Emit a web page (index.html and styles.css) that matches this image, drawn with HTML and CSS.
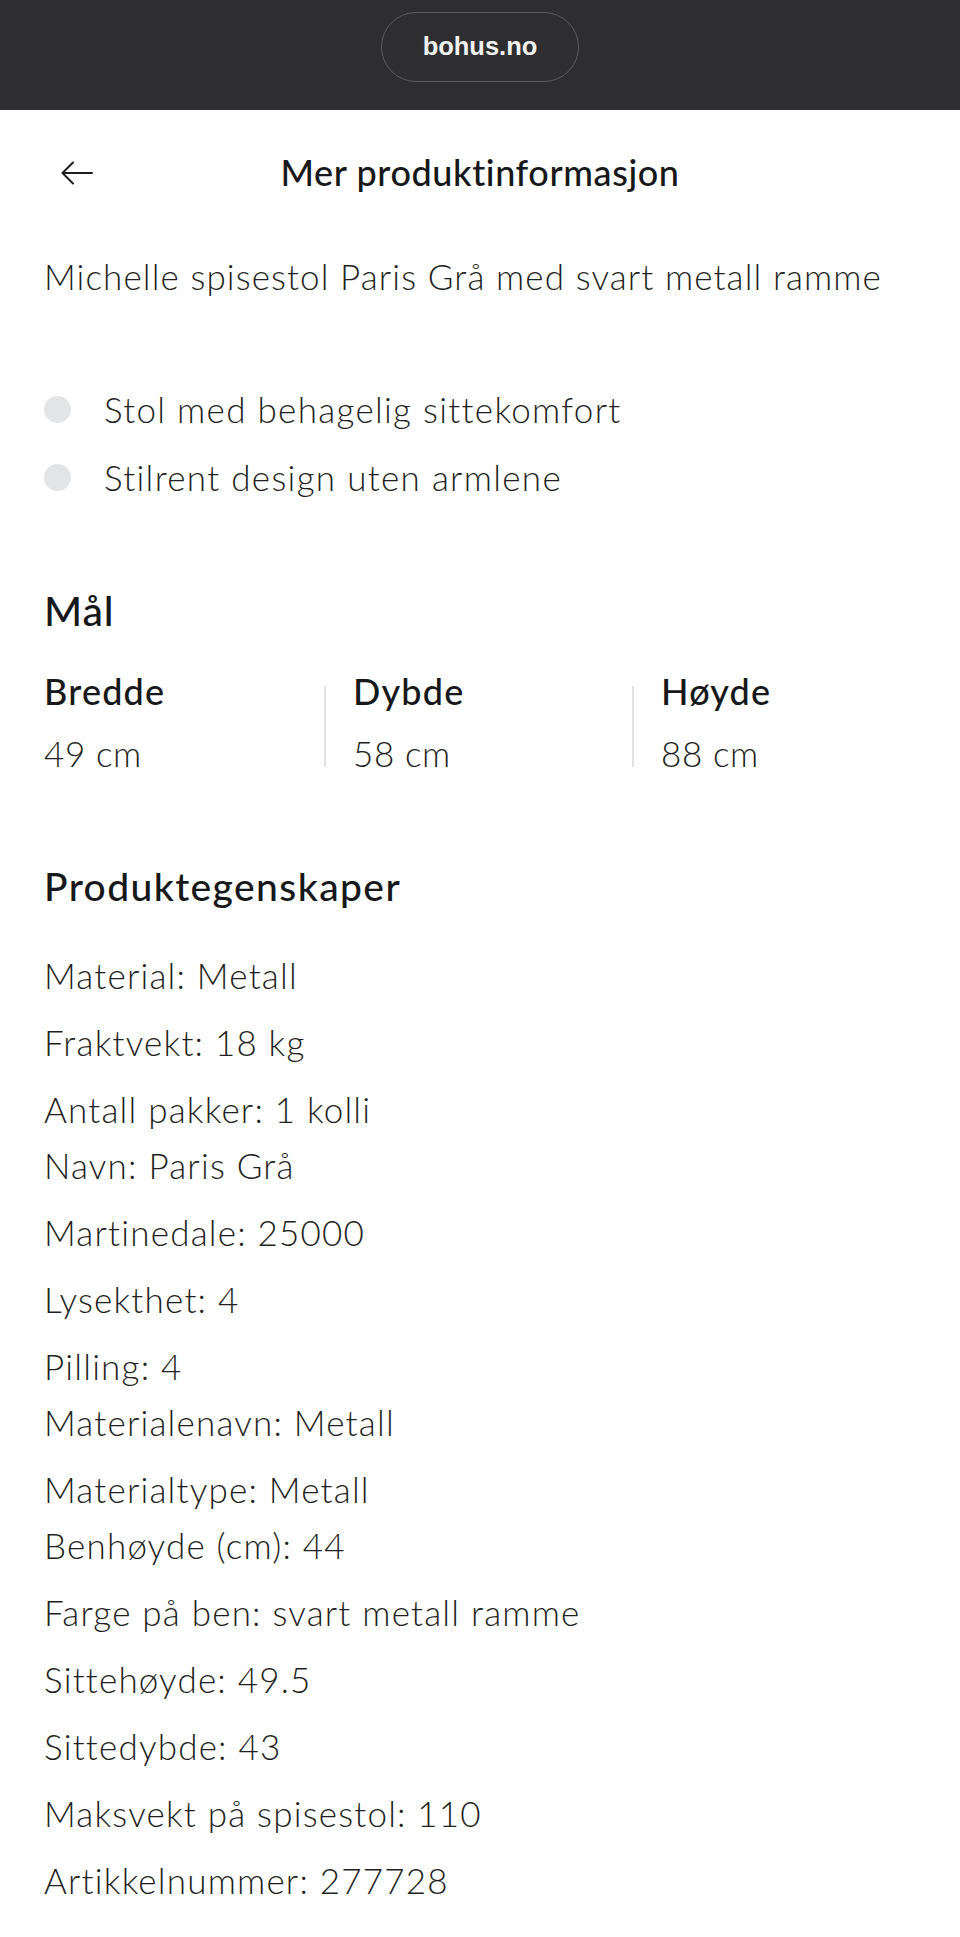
FILE: index.html
```html
<!DOCTYPE html>
<html lang="no">
<head>
<meta charset="utf-8">
<title>Mer produktinformasjon</title>
<link rel="stylesheet" href="styles.css">
</head>
<body>
<header class="browser-bar">
  <div class="url-pill">bohus.no</div>
</header>
<main class="sheet">
  <div class="sheet-head">
    <button class="back" aria-label="Tilbake">
      <svg width="32" height="24" viewBox="0 0 32 24" fill="none" stroke="#1d1d1f" stroke-width="2" stroke-linecap="round" stroke-linejoin="round"><path d="M31 12H1.5M12 1.5 1.5 12 12 22.5"/></svg>
    </button>
    <h1 class="sheet-title">Mer produktinformasjon</h1>
    <span></span>
  </div>
  <div class="content">
    <p class="desc">Michelle spisestol Paris Grå med svart metall ramme</p>
    <ul class="usps">
      <li><span class="dot"></span>Stol med behagelig sittekomfort</li>
      <li><span class="dot"></span>Stilrent design uten armlene</li>
    </ul>
    <h2 class="section-title mal">Mål</h2>
    <div class="dims">
      <div class="dim">
        <div class="dim-label">Bredde</div>
        <div class="dim-value">49 cm</div>
      </div>
      <span class="divider"></span>
      <div class="dim">
        <div class="dim-label">Dybde</div>
        <div class="dim-value">58 cm</div>
      </div>
      <span class="divider"></span>
      <div class="dim">
        <div class="dim-label">Høyde</div>
        <div class="dim-value">88 cm</div>
      </div>
    </div>
    <h2 class="section-title props-title">Produktegenskaper</h2>
    <div class="props">
      <p>Material: Metall</p>
      <p>Fraktvekt: 18 kg</p>
      <p>Antall pakker: 1 kolli<br>Navn: Paris Grå</p>
      <p>Martinedale: 25000</p>
      <p>Lysekthet: 4</p>
      <p>Pilling: 4<br>Materialenavn: Metall</p>
      <p>Materialtype: Metall<br>Benhøyde (cm): 44</p>
      <p>Farge på ben: svart metall ramme</p>
      <p>Sittehøyde: 49.5</p>
      <p>Sittedybde: 43</p>
      <p>Maksvekt på spisestol: 110</p>
      <p>Artikkelnummer: 277728</p>
    </div>
  </div>
</main>
</body>
</html>
```
FILE: styles.css
```css
* { box-sizing: border-box; }
html, body { margin: 0; padding: 0; background: #ffffff; }
body {
  font-family: "Lato", "Liberation Sans", sans-serif;
  font-variant-ligatures: none;
  color: #1f1f21;
  width: 960px;
  height: 1937px;
  overflow: hidden;
}

.browser-bar {
  height: 110px;
  background: #2e2e30;
  display: flex;
  justify-content: center;
  padding-top: 12px;
}
.url-pill {
  width: 198px;
  height: 70px;
  border: 1.5px solid #5d5d61;
  border-radius: 35px;
  display: flex;
  align-items: center;
  justify-content: center;
  font-family: "Liberation Sans", Arial, sans-serif;
  font-weight: 700;
  font-size: 25.5px;
  color: #f1f1f1;
  padding-bottom: 2px;
}

.sheet-head {
  height: 126px;
  display: grid;
  grid-template-columns: 1fr auto 1fr;
  align-items: center;
  padding: 0 44px;
}
.back {
  justify-self: start;
  background: none;
  border: 0;
  padding: 0 0 0 17px;
  margin: 0;
  display: flex;
  align-items: center;
  cursor: pointer;
}
.sheet-title {
  margin: 0;
  font-size: 36px;
  font-weight: 500;
  line-height: 1.2;
  color: #17181a;
  letter-spacing: 0.6px;
}

.content { padding: 0 44px; }

.desc {
  margin: 12px 0 0;
  font-size: 35px;
  font-weight: 300;
  line-height: 56px;
  letter-spacing: 1.1px;
}

.usps {
  list-style: none;
  margin: 77px 0 0;
  padding: 0;
  display: flex;
  flex-direction: column;
  gap: 12px;
}
.usps li {
  display: flex;
  align-items: center;
  gap: 33px;
  font-size: 35px;
  font-weight: 300;
  line-height: 56px;
  letter-spacing: 1.3px;
}
.dot {
  width: 27px;
  height: 27px;
  border-radius: 50%;
  background: #e3e4e5;
  flex: none;
}

.section-title {
  margin: 0;
  font-weight: 500;
  line-height: 1.2;
  color: #17181a;
}
.mal { font-size: 41px; margin-top: 81px; letter-spacing: 0.8px; }

.dims {
  margin-top: 35px;
  display: grid;
  grid-template-columns: 280px 1px 307px 1px 1fr;
  align-items: start;
}
.divider + .dim { padding-left: 28px; }
.divider {
  width: 1.5px;
  height: 81px;
  margin-top: 16px;
  background: #e2e2e2;
}
.dim-label {
  font-size: 36px;
  font-weight: 500;
  line-height: 1.2;
  color: #17181a;
  letter-spacing: 1.2px;
}
.dim-value {
  margin-top: 19px;
  font-size: 35px;
  font-weight: 300;
  line-height: 1.2;
  letter-spacing: 0.6px;
}

.props-title { font-size: 39px; margin-top: 89px; letter-spacing: 1.4px; }

.props { margin-top: 37px; }
.props p {
  margin: 0 0 11px;
  font-size: 35px;
  font-weight: 300;
  line-height: 56px;
  letter-spacing: 1.2px;
}
```
